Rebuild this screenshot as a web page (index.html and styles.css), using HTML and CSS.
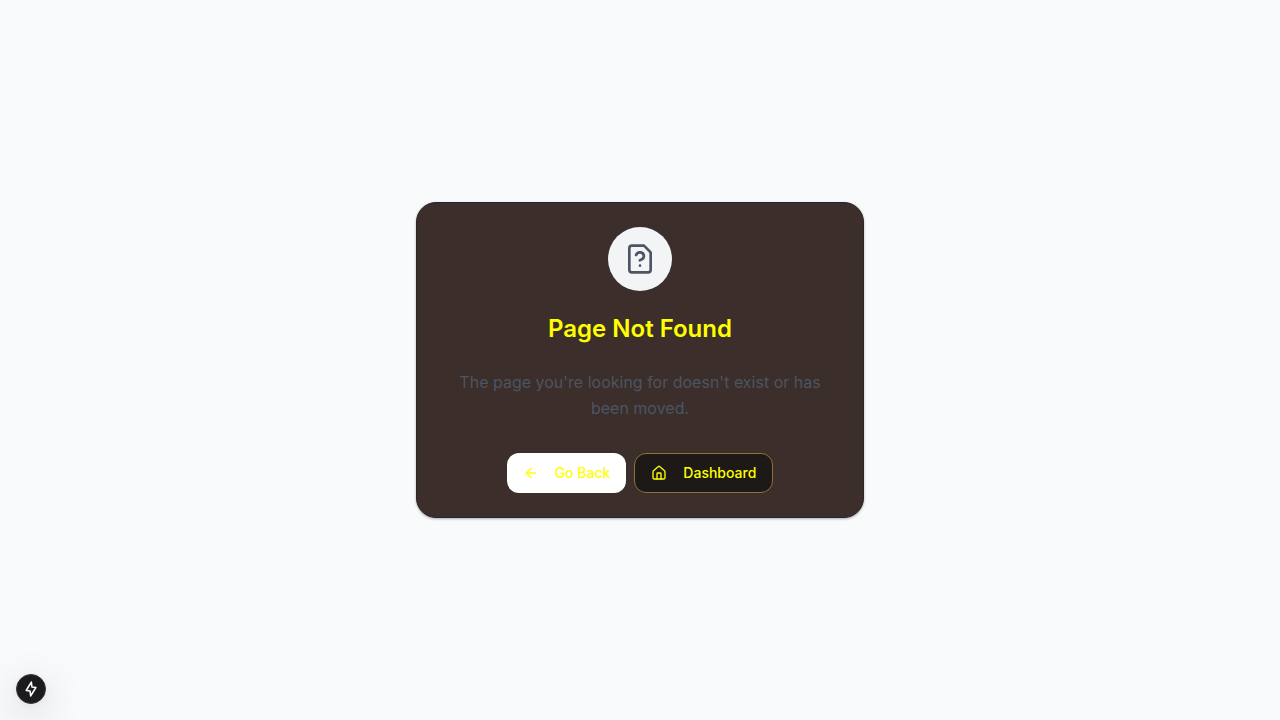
FILE: index.html
```html
<!DOCTYPE html>
<html lang="en">
<head>
<meta charset="utf-8">
<meta name="viewport" content="width=device-width, initial-scale=1">
<title>Page Not Found</title>
<link rel="stylesheet" href="styles.css">
</head>
<body>
<main class="page">
  <section class="card">
    <div class="badge">
      <svg class="icon badge-icon" viewBox="0 0 24 24" aria-hidden="true"><path d="M12 17h.01"/><path d="M15 2H6a2 2 0 0 0-2 2v16a2 2 0 0 0 2 2h12a2 2 0 0 0 2-2V7z"/><path d="M9.1 9a3 3 0 0 1 5.82 1c0 2-3 3-3 3"/></svg>
    </div>
    <h1 class="title">Page Not Found</h1>
    <p class="message">The page you're looking for doesn't exist or has been moved.</p>
    <div class="actions">
      <button class="button button-plain" type="button">
        <svg class="icon button-icon" viewBox="0 0 24 24" aria-hidden="true"><path d="m12 19-7-7 7-7"/><path d="M19 12H5"/></svg>
        Go Back
      </button>
      <a class="button button-outline" href="#">
        <svg class="icon button-icon" viewBox="0 0 24 24" aria-hidden="true"><path d="M15 21v-8a1 1 0 0 0-1-1h-4a1 1 0 0 0-1 1v8"/><path d="M3 10a2 2 0 0 1 .709-1.528l7-5.999a2 2 0 0 1 2.582 0l7 5.999A2 2 0 0 1 21 10v9a2 2 0 0 1-2 2H5a2 2 0 0 1-2-2z"/></svg>
        Dashboard
      </a>
    </div>
  </section>
</main>
<button class="dev-indicator" type="button" aria-label="Open developer tools">
  <svg class="bolt" viewBox="0 0 16 16" aria-hidden="true"><path d="M8.4 1 3.2 9.5 7.1 10.1 7.6 15 12.9 6.5 8.9 5.9Z"/></svg>
</button>
</body>
</html>
```
FILE: styles.css
```css
*, *::before, *::after {
  box-sizing: border-box;
}

body {
  margin: 0;
  background: #f8fafc;
  font-family: Inter, "Liberation Sans", sans-serif;
}

.page {
  min-height: 100vh;
  display: flex;
  align-items: center;
  justify-content: center;
  padding: 16px;
}

.card {
  width: 100%;
  max-width: 448px;
  padding: 24px;
  display: flex;
  flex-direction: column;
  align-items: center;
  text-align: center;
  background: #3c2e2a;
  border: 1px solid #27272a;
  border-radius: 20px;
  box-shadow: 0 1px 3px rgba(0, 0, 0, 0.2), 0 1px 2px rgba(0, 0, 0, 0.12);
}

.icon {
  fill: none;
  stroke: currentColor;
  stroke-width: 2;
  stroke-linecap: round;
  stroke-linejoin: round;
  flex-shrink: 0;
}

.badge {
  width: 64px;
  height: 64px;
  display: flex;
  align-items: center;
  justify-content: center;
  border-radius: 50%;
  background: #f3f4f6;
  color: #4b5563;
}

.badge-icon {
  width: 32px;
  height: 32px;
}

.title {
  margin: 22px 0 0;
  font-size: 24px;
  line-height: 32px;
  font-weight: 600;
  color: #ffff00;
}

.message {
  margin: 24px 0 0;
  padding: 0 16px;
  font-size: 16px;
  line-height: 26px;
  color: #4b5563;
}

.actions {
  margin-top: 32px;
  display: flex;
  flex-wrap: wrap;
  justify-content: center;
  gap: 8px;
}

.button {
  height: 40px;
  padding: 0 16px;
  display: inline-flex;
  align-items: center;
  gap: 16px;
  border: 0;
  border-radius: 12px;
  font-family: inherit;
  font-size: 14px;
  line-height: 20px;
  font-weight: 500;
  color: #ffff00;
  text-decoration: none;
  cursor: pointer;
}

.button-plain {
  background: #ffffff;
}

.button-outline {
  background: #1c1917;
  border: 1px solid #92703a;
}

.button-icon {
  width: 16px;
  height: 16px;
}

.dev-indicator {
  position: fixed;
  left: 16px;
  bottom: 16px;
  width: 30px;
  height: 30px;
  padding: 0;
  display: flex;
  align-items: center;
  justify-content: center;
  border: 1px solid #3a3a3a;
  border-radius: 50%;
  background: #1b1b1d;
  box-shadow: 0 11px 40px rgba(0, 0, 0, 0.18), 0 2px 10px rgba(0, 0, 0, 0.06);
}

.bolt {
  width: 16px;
  height: 16px;
  fill: none;
  stroke: #ffffff;
  stroke-width: 1.5;
  stroke-linejoin: round;
}
```
